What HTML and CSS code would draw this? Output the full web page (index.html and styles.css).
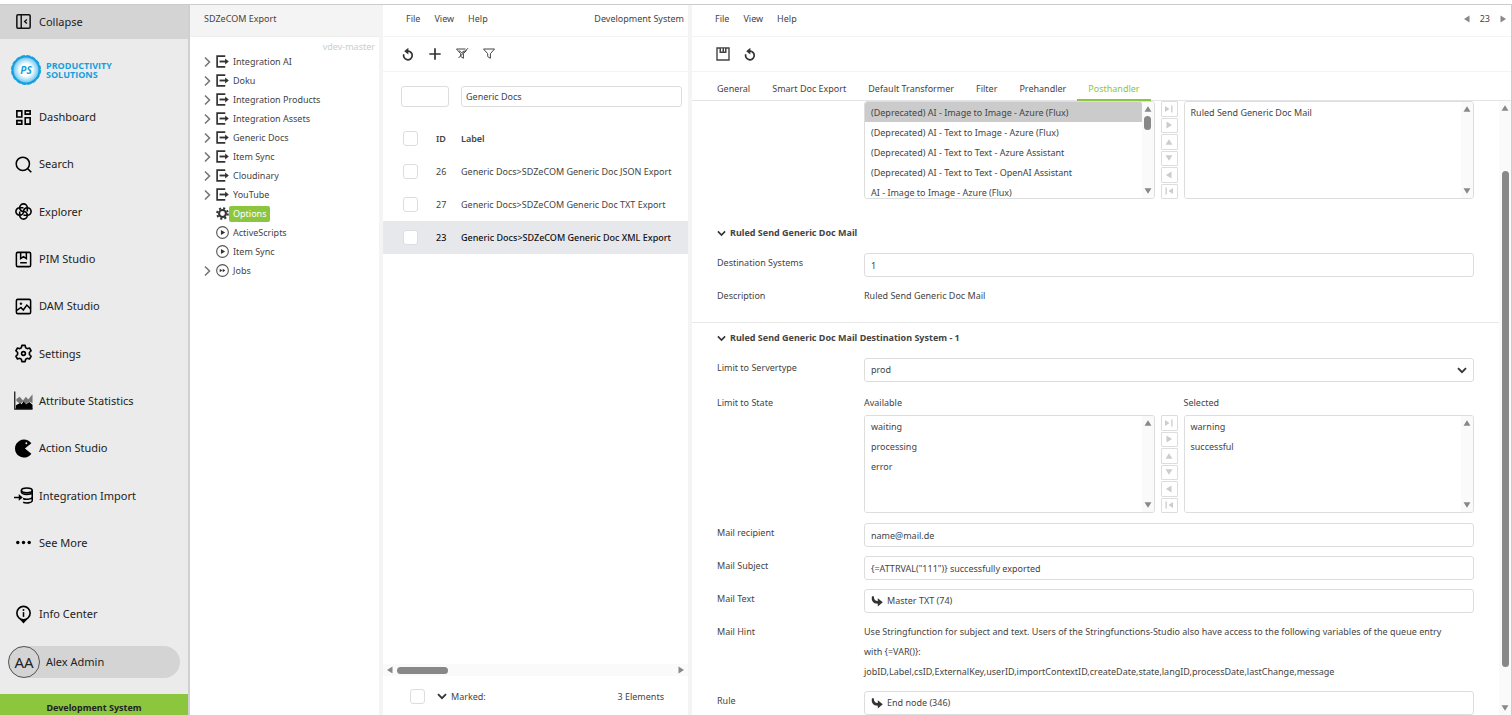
FILE: index.html
```html
<!DOCTYPE html>
<html lang="en">
<head>
<meta charset="utf-8">
<title>SDZeCOM Export</title>
<link rel="stylesheet" href="styles.css">
</head>
<body>
<svg class="defs" aria-hidden="true">
  <symbol id="i-export" viewBox="0 0 14 14"><path d="M10 1.200H1.200v11.600H10" fill="none" stroke="#333" stroke-width="1.800"/><path d="M3.800 7h8" stroke="#333" stroke-width="2"/><path d="M9.800 3.900 13.800 7 9.800 10.100z" fill="#333"/></symbol>
  <symbol id="i-right" viewBox="0 0 8 12"><path d="M1.500 1.500 6 6l-4.500 4.500" fill="none" stroke="#777" stroke-width="1.600"/></symbol>
  <symbol id="i-down" viewBox="0 0 10 7"><path d="M1 1.200 5 5.200l4-4" fill="none" stroke="#333" stroke-width="1.800"/></symbol>
  <symbol id="i-gear" viewBox="0 0 14 14"><circle cx="7" cy="7" r="3.700" fill="none" stroke="#333" stroke-width="2.200"/><circle cx="7" cy="7" r="5.700" fill="none" stroke="#333" stroke-width="2.200" stroke-dasharray="2.240 2.240"/></symbol>
  <symbol id="i-play" viewBox="0 0 14 14"><circle cx="7" cy="7" r="6.300" fill="none" stroke="#555" stroke-width="1.200"/><path d="M5.300 4.200 9.900 7l-4.600 2.800z" fill="#333"/></symbol>
  <symbol id="i-jobs" viewBox="0 0 14 14"><circle cx="7" cy="7" r="6.300" fill="none" stroke="#555" stroke-width="1.200"/><path d="M4 5.100 6.900 7 4 8.900zM7.200 5.100 10.100 7 7.200 8.900z" fill="#333"/></symbol>
  <symbol id="i-undo" viewBox="0 0 12 14"><path d="M1.800 7.200A4.300 4.300 0 1 0 6 4.200" fill="none" stroke="#333" stroke-width="1.700"/><path d="M2.200 4.200 6.400.800v6.600z" fill="#333"/></symbol>
  <symbol id="i-plus" viewBox="0 0 14 14"><path d="M7 1.300v11.400M1.300 7h11.400" stroke="#333" stroke-width="1.700"/></symbol>
  <symbol id="i-funnel" viewBox="0 0 14 14"><path d="M1.500 2h11L8.400 6.700v4.600L5.700 9.500V6.700z" fill="none" stroke="#444" stroke-width="1"/></symbol>
  <symbol id="i-funnel-x" viewBox="0 0 14 14"><path d="M11.500 3.500 8.400 6.700v4.600L5.700 9.500V6.700L1.500 2h9" fill="none" stroke="#444" stroke-width="1"/><path d="M13 1.200 3.500 11M4 3.700l2.800 2 2.600-2" fill="none" stroke="#444" stroke-width="1"/></symbol>
  <symbol id="i-save" viewBox="0 0 14 14"><path d="M1 1h12v12H1z" fill="none" stroke="#444" stroke-width="1.400"/><path d="M3.500 1h7v5h-7z" fill="#444"/><path d="M5 1.500h1.500v3H5zM8 1.500h1v3H8z" fill="#fff"/></symbol>
  <symbol id="i-turn" viewBox="0 0 12 11"><path d="M1 .300C0 4.600 2 7.800 6.800 7.800v2.800L11.800 6.300 6.800 2.200V5C4 5 2.800 3.200 2.800.300z" fill="#333"/></symbol>
  <symbol id="t-left" viewBox="0 0 8 8"><path d="M6.500.500v7L1 4z" fill="currentColor"/></symbol>
  <symbol id="t-right" viewBox="0 0 8 8"><path d="M1.500.500v7L7 4z" fill="currentColor"/></symbol>
  <symbol id="t-up" viewBox="0 0 8 8"><path d="M.500 6.800h7L4 1.300z" fill="currentColor"/></symbol>
  <symbol id="t-down" viewBox="0 0 8 8"><path d="M.500 1.200h7L4 6.700z" fill="currentColor"/></symbol>
  <symbol id="t-last" viewBox="0 0 8 8"><path d="M0 1v6l4.500-3zM6.200.500h1.300v7H6.200z" fill="currentColor"/></symbol>
  <symbol id="t-first" viewBox="0 0 8 8"><path d="M8 1v6L3.500 4zM.500.500h1.300v7H.500z" fill="currentColor"/></symbol>
</svg>
<div class="app">
  <aside class="sidebar">
    <button class="collapse" type="button">
      <svg class="nav-icon" viewBox="0 0 20 20"><rect x="3" y="3" width="14" height="14" rx="1.200" fill="none" stroke="#111" stroke-width="1.600"/><path d="M7.600 3v14" stroke="#111" stroke-width="1.500"/><path d="M13.600 7.800 11.200 10l2.400 2.200" fill="none" stroke="#111" stroke-width="1.500"/></svg>
      Collapse
    </button>
    <a class="brand" href="#">
      <svg class="brand-mark" viewBox="0 0 32 32">
        <defs><radialGradient id="glow"><stop offset="0.450" stop-color="#fff"/><stop offset="1" stop-color="#5cc0ee"/></radialGradient></defs>
        <circle cx="16" cy="16" r="13.500" fill="url(#glow)" stroke="#149fdf" stroke-width="2"/>
        <circle cx="16" cy="16" r="14.500" fill="none" stroke="#149fdf" stroke-width="1" stroke-dasharray="4 1.700"/>
        <text class="brand-ps" x="16" y="20" text-anchor="middle">PS</text>
      </svg>
      <span class="brand-name"><span>PRODUCTIVITY</span><span>SOLUTIONS</span></span>
    </a>
    <nav class="nav">
      <a href="#"><svg class="nav-icon" viewBox="0 0 20 20"><path d="M3 3h5.200v6.500H3zM11.800 3H17v3.500h-5.200zM11.800 10.200H17V17h-5.200zM3 13.300h5.200V17H3z" fill="none" stroke="#000" stroke-width="1.700"/></svg>Dashboard</a>
      <a href="#"><svg class="nav-icon" viewBox="0 0 20 20"><circle cx="9.300" cy="9.300" r="7" fill="none" stroke="#000" stroke-width="1.600"/><path d="m14.200 14.200 4 4" stroke="#000" stroke-width="1.700"/></svg>Search</a>
      <a href="#"><svg class="nav-icon" viewBox="0 0 20 20" fill="none" stroke="#000" stroke-width="1.700"><path d="M10 10a4 4 0 1 1 4-4v4M10 10a4 4 0 1 1 4 4h-4M10 10a4 4 0 1 1-4 4v-4M10 10a4 4 0 1 1-4-4h4"/></svg>Explorer</a>
      <a href="#"><svg class="nav-icon" viewBox="0 0 20 20" fill="none" stroke="#000" stroke-width="1.600"><rect x="2.500" y="2.500" width="15" height="15" rx="1.500"/><path d="M7 2.500V9l3-2 3 2V2.500M6.500 13.300h7"/></svg>PIM Studio</a>
      <a href="#"><svg class="nav-icon" viewBox="0 0 20 20" fill="none" stroke="#000" stroke-width="1.600"><rect x="2.500" y="2.500" width="15" height="15" rx="1.500"/><path d="m3 14 4.300-3 2.500 2.700L13.500 8.500l4 4"/><circle cx="7.300" cy="7" r="1" fill="#000" stroke-width=".600"/></svg>DAM Studio</a>
      <a href="#"><svg class="nav-icon" viewBox="0 0 20 20" fill="none" stroke="#000" stroke-width="1.700" stroke-linejoin="round"><path d="M8.300 1.500h3.400l.600 2.500 1.600.900 2.400-.700 1.700 2.900L16.200 9v2l1.800 1.900-1.700 2.900-2.400-.700-1.600.900-.600 2.500H8.300L7.700 16l-1.600-.900-2.400.700L2 12.900 3.800 11V9L2 7.100l1.700-2.900 2.400.700L7.700 4z"/><circle cx="10" cy="10" r="2"/></svg>Settings</a>
      <a href="#"><svg class="nav-icon" viewBox="0 0 20 20"><path d="M2.500 8.500 6 6l3.500 4 3-4 2.500 3L19.500 3.500v9.500l-3.500-2-3 2.500-3.500-2.500-3 2.500-4-3z" fill="#777"/><path d="M2 15l4.500-2.500L8 14l2-3 3 3 3-2.500 3.500 3V19H2z" fill="#000"/><path d="M.800.500v18.700H19.500" fill="none" stroke="#111" stroke-width="1.300"/></svg>Attribute Statistics</a>
      <a href="#"><svg class="nav-icon" viewBox="0 0 20 20"><path d="M18.300 4.600 11.500 10l6.800 5.500A9.500 9.500 0 1 1 10.500.500c3 0 6 1.500 7.800 4.100z" fill="#000"/><circle cx="13" cy="4.500" r="1" fill="#ebebeb"/></svg>Action Studio</a>
      <a href="#"><svg class="nav-icon" viewBox="0 0 20 20" fill="none" stroke="#000" stroke-width="1.600"><ellipse cx="13.500" cy="4.500" rx="5.700" ry="2.500"/><path d="M7.800 4.500v2.300c1.500 2.700 9.500 2.700 11.400 0v9c-1 2.200-7 2.600-9.500 1.300M19.200 4.500v3M9.500 13.200c2.500 1.300 8.500 1 9.700-1.200M0 12h5.500"/><path d="M5 8.500 9.200 12 5 15.500z" fill="#000" stroke="none"/></svg>Integration Import</a>
      <a href="#"><svg class="nav-icon" viewBox="0 0 20 20"><circle cx="4" cy="10" r="1.800"/><circle cx="10" cy="10" r="1.800"/><circle cx="16" cy="10" r="1.800"/></svg>See More</a>
    </nav>
    <a class="info" href="#"><svg class="nav-icon" viewBox="0 0 20 20"><circle cx="10" cy="8.500" r="7" fill="none" stroke="#000" stroke-width="1.700"/><path d="M4.500 13.500 10 19.500l5.500-6c-3 2.300-8 2.300-11 0z"/><path d="M10 7.500v5" stroke="#000" stroke-width="1.600"/><circle cx="10" cy="5.300" r="1"/></svg>Info Center</a>
    <button class="user" type="button"><span class="avatar">AA</span>Alex Admin</button>
    <div class="system">Development System</div>
  </aside>

  <section class="tree-panel">
    <header class="tree-head">SDZeCOM Export</header>
    <div class="version">vdev-master</div>
    <ul class="tree">
      <li><svg class="caret"><use href="#i-right"/></svg><svg class="tree-icon"><use href="#i-export"/></svg><a href="#">Integration AI</a></li>
      <li><svg class="caret"><use href="#i-right"/></svg><svg class="tree-icon"><use href="#i-export"/></svg><a href="#">Doku</a></li>
      <li><svg class="caret"><use href="#i-right"/></svg><svg class="tree-icon"><use href="#i-export"/></svg><a href="#">Integration Products</a></li>
      <li><svg class="caret"><use href="#i-right"/></svg><svg class="tree-icon"><use href="#i-export"/></svg><a href="#">Integration Assets</a></li>
      <li><svg class="caret"><use href="#i-right"/></svg><svg class="tree-icon"><use href="#i-export"/></svg><a href="#">Generic Docs</a></li>
      <li><svg class="caret"><use href="#i-right"/></svg><svg class="tree-icon"><use href="#i-export"/></svg><a href="#">Item Sync</a></li>
      <li><svg class="caret"><use href="#i-right"/></svg><svg class="tree-icon"><use href="#i-export"/></svg><a href="#">Cloudinary</a></li>
      <li><svg class="caret"><use href="#i-right"/></svg><svg class="tree-icon"><use href="#i-export"/></svg><a href="#">YouTube</a></li>
      <li><span class="caret"></span><svg class="tree-icon"><use href="#i-gear"/></svg><a class="current" href="#">Options</a></li>
      <li><span class="caret"></span><svg class="tree-icon"><use href="#i-play"/></svg><a href="#">ActiveScripts</a></li>
      <li><span class="caret"></span><svg class="tree-icon"><use href="#i-play"/></svg><a href="#">Item Sync</a></li>
      <li><svg class="caret"><use href="#i-right"/></svg><svg class="tree-icon"><use href="#i-jobs"/></svg><a href="#">Jobs</a></li>
    </ul>
  </section>

  <section class="list-panel">
    <header class="bar">
      <button type="button">File</button><button type="button">View</button><button type="button">Help</button>
      <span class="bar-end">Development System</span>
    </header>
    <div class="tools">
      <button type="button" aria-label="Reload"><svg class="tool"><use href="#i-undo"/></svg></button>
      <button type="button" aria-label="Add"><svg class="tool"><use href="#i-plus"/></svg></button>
      <button type="button" aria-label="Clear filter"><svg class="tool"><use href="#i-funnel-x"/></svg></button>
      <button type="button" aria-label="Filter"><svg class="tool"><use href="#i-funnel"/></svg></button>
    </div>
    <div class="filters">
      <input type="text" aria-label="Filter by ID">
      <input type="text" aria-label="Filter by label" value="Generic Docs">
    </div>
    <table class="items">
      <thead><tr><th class="pick"><input type="checkbox" aria-label="Select all"></th><th class="id">ID</th><th>Label</th></tr></thead>
      <tbody>
        <tr><td class="pick"><input type="checkbox" aria-label="Select 26"></td><td class="id">26</td><td>Generic Docs&gt;SDZeCOM Generic Doc JSON Export</td></tr>
        <tr><td class="pick"><input type="checkbox" aria-label="Select 27"></td><td class="id">27</td><td>Generic Docs&gt;SDZeCOM Generic Doc TXT Export</td></tr>
        <tr class="active"><td class="pick"><input type="checkbox" aria-label="Select 23"></td><td class="id">23</td><td>Generic Docs&gt;SDZeCOM Generic Doc XML Export</td></tr>
      </tbody>
    </table>
    <div class="hscroll"><svg class="arrow"><use href="#t-left"/></svg><div class="track"><div class="thumb"></div></div><svg class="arrow"><use href="#t-right"/></svg></div>
    <footer class="list-foot">
      <input type="checkbox" id="marked"><svg class="chev"><use href="#i-down"/></svg><label for="marked">Marked:</label>
      <span class="count">3 Elements</span>
    </footer>
  </section>

  <main class="detail">
    <header class="bar">
      <button type="button">File</button><button type="button">View</button><button type="button">Help</button>
      <div class="bar-end pager"><button type="button" aria-label="Previous"><svg class="arrow"><use href="#t-left"/></svg></button><span>23</span><button type="button" aria-label="Next"><svg class="arrow"><use href="#t-right"/></svg></button></div>
    </header>
    <div class="tools">
      <button type="button" aria-label="Save"><svg class="tool"><use href="#i-save"/></svg></button>
      <button type="button" aria-label="Revert"><svg class="tool"><use href="#i-undo"/></svg></button>
    </div>
    <nav class="tabs">
      <a href="#">General</a><a href="#">Smart Doc Export</a><a href="#">Default Transformer</a><a href="#">Filter</a><a href="#">Prehandler</a><a class="on" href="#">Posthandler</a>
    </nav>
    <div class="scroller">
      <form class="form">
        <div class="group group-first">
          <div class="shuttle shuttle-alone">
            <div class="listbox"><select multiple aria-label="Available posthandlers"><option class="hit">(Deprecated) AI - Image to Image - Azure (Flux)</option><option>(Deprecated) AI - Text to Image - Azure (Flux)</option><option>(Deprecated) AI - Text to Text - Azure Assistant</option><option>(Deprecated) AI - Text to Text - OpenAI Assistant</option><option>AI - Image to Image - Azure (Flux)</option></select><div class="vbar"><svg class="arrow"><use href="#t-up"/></svg><div class="track"><div class="thumb"></div></div><svg class="arrow"><use href="#t-down"/></svg></div></div>
            <div class="moves"><button type="button" aria-label="Add all"><svg><use href="#t-last"/></svg></button><button type="button" aria-label="Add"><svg><use href="#t-right"/></svg></button><button type="button" aria-label="Up"><svg><use href="#t-up"/></svg></button><button type="button" aria-label="Down"><svg><use href="#t-down"/></svg></button><button type="button" aria-label="Remove"><svg><use href="#t-left"/></svg></button><button type="button" aria-label="Remove all"><svg><use href="#t-first"/></svg></button></div>
            <div class="listbox"><select multiple aria-label="Selected posthandlers"><option>Ruled Send Generic Doc Mail</option></select><div class="vbar"><svg class="arrow"><use href="#t-up"/></svg><div class="track"></div><svg class="arrow"><use href="#t-down"/></svg></div></div>
          </div>
        </div>

        <div class="group">
          <h2><svg class="chev"><use href="#i-down"/></svg>Ruled Send Generic Doc Mail</h2>
          <div class="row"><label for="dest">Destination Systems</label><input id="dest" type="text" value="1"></div>
          <div class="row row-text"><span class="name">Description</span><span class="value">Ruled Send Generic Doc Mail</span></div>
        </div>

        <div class="group group-ruled">
          <h2><svg class="chev"><use href="#i-down"/></svg>Ruled Send Generic Doc Mail Destination System - 1</h2>
          <div class="row"><label for="server">Limit to Servertype</label><div class="pickbox"><select id="server"><option>prod</option></select><svg class="chev"><use href="#i-down"/></svg></div></div>
          <div class="row row-state"><span class="name">Limit to State</span>
            <div class="shuttle">
              <label for="avail">Available</label><span></span><label for="chosen">Selected</label>
              <div class="listbox"><select multiple id="avail"><option>waiting</option><option>processing</option><option>error</option></select><div class="vbar"><svg class="arrow"><use href="#t-up"/></svg><div class="track"></div><svg class="arrow"><use href="#t-down"/></svg></div></div>
              <div class="moves"><button type="button" aria-label="Add all"><svg><use href="#t-last"/></svg></button><button type="button" aria-label="Add"><svg><use href="#t-right"/></svg></button><button type="button" aria-label="Up"><svg><use href="#t-up"/></svg></button><button type="button" aria-label="Down"><svg><use href="#t-down"/></svg></button><button type="button" aria-label="Remove"><svg><use href="#t-left"/></svg></button><button type="button" aria-label="Remove all"><svg><use href="#t-first"/></svg></button></div>
              <div class="listbox"><select multiple id="chosen"><option>warning</option><option>successful</option></select><div class="vbar"><svg class="arrow"><use href="#t-up"/></svg><div class="track"></div><svg class="arrow"><use href="#t-down"/></svg></div></div>
            </div>
          </div>
          <div class="row"><label for="rcpt">Mail recipient</label><input id="rcpt" type="text" value="name@mail.de"></div>
          <div class="row"><label for="subj">Mail Subject</label><input id="subj" type="text" value="{=ATTRVAL(&quot;111&quot;)} successfully exported"></div>
          <div class="row"><span class="name">Mail Text</span><button class="ref" type="button"><svg><use href="#i-turn"/></svg>Master TXT (74)</button></div>
          <div class="row row-text"><span class="name">Mail Hint</span><p class="value">Use Stringfunction for subject and text. Users of the Stringfunctions-Studio also have access to the following variables of the queue entry<br>with {=VAR()}:<br>jobID,Label,csID,ExternalKey,userID,importContextID,createDate,state,langID,processDate,lastChange,message</p></div>
          <div class="row"><span class="name">Rule</span><button class="ref" type="button"><svg><use href="#i-turn"/></svg>End node (346)</button></div>
        </div>
      </form>
      <div class="vbar page-bar"><svg class="arrow"><use href="#t-up"/></svg><div class="track"><div class="thumb"></div></div><svg class="arrow"><use href="#t-down"/></svg></div>
    </div>
  </main>
</div>
</body>
</html>
```
FILE: styles.css
```css
* { box-sizing: border-box; }
body {
  margin: 0;
  padding-top: 4px;
  height: 100vh;
  overflow: hidden;
  background: #fff;
  color: #444;
  font: 9px/14px "Noto Sans", sans-serif;
}
button, input, select { font: inherit; color: inherit; margin: 0; }
button { border: 0; padding: 0; background: none; }
a { color: inherit; text-decoration: none; }
.defs { display: none; }
svg { flex: none; }

.app {
  display: grid;
  grid-template-columns: 190px 193px 309px minmax(0, 1fr);
  height: 100%;
  border-top: 1px solid #ccc;
  border-right: 1px solid #ccc;
}

/* Sidebar */
.sidebar {
  display: flex;
  flex-direction: column;
  min-height: 0;
  background: #ebebeb;
  border-right: 2px solid #d0d0d0;
  font: 11px/16px "Noto Sans", sans-serif;
  color: #222;
}
.collapse, .nav a, .info {
  display: flex;
  align-items: center;
  gap: 6px;
  padding: 0 0 1px 14px;
}
.collapse { height: 34px; background: #d4d4d4; }
.nav-icon { width: 19px; height: 19px; }
.brand {
  display: flex;
  align-items: center;
  gap: 4px;
  height: 55px;
  padding: 7px 0 0 10px;
}
.brand-mark { width: 32px; height: 32px; }
.brand-ps { font: italic bold 10px "Noto Sans", sans-serif; fill: #149fdf; }
.brand-name {
  display: grid;
  font: bold 9px/9px "Open Sans", sans-serif;
  color: #149fdf;
}
.nav { flex: 1; display: flex; flex-direction: column; min-height: 0; }
.nav a { flex: 1; }
.info { height: 47px; margin-top: 24px; }
.user {
  display: flex;
  align-items: center;
  gap: 6px;
  height: 32px;
  margin: 8px 8px 16px;
  border-radius: 16px;
  background: #d4d4d4;
}
.avatar {
  width: 32px;
  height: 32px;
  border: 1px solid #555;
  border-radius: 50%;
  font-size: 15px;
  line-height: 31px;
  text-align: center;
}
.system {
  height: 21px;
  padding-top: 4px;
  background: #8cc63f;
  font-size: 9px;
  font-weight: bold;
  line-height: 20px;
  text-align: center;
}

/* Tree */
.tree-panel { border-right: 4px solid #f4f4f4; }
.tree-head {
  height: 32px;
  padding-left: 14px;
  line-height: 28px;
  background: #f4f4f4;
  border-bottom: 1px solid #eee;
}
.version { height: 15px; padding: 3px 4px 0 0; text-align: right; color: #ccc; }
.tree { margin: 0; padding: 0 0 0 13px; list-style: none; }
.tree li { display: flex; align-items: center; height: 19px; }
.caret { width: 9px; height: 12px; margin-right: 4px; }
.tree-icon { width: 13px; height: 13px; }
.tree a { padding: 0 4px; border-radius: 2px; line-height: 16px; }
.tree .current { background: #8cc63f; color: #fff; }

/* Shared bars */
.list-panel, .detail { display: flex; flex-direction: column; min-width: 0; min-height: 0; }
.list-panel { border-right: 4px solid #f4f4f4; }
.bar {
  display: flex;
  align-items: center;
  gap: 14px;
  flex: none;
  height: 32px;
  padding: 0 4px 3px 23px;
  border-bottom: 1px solid #f4f4f4;
}
.bar-end { margin-left: auto; }
.pager { display: flex; align-items: center; gap: 9px; }
.arrow { display: block; width: 8px; height: 8px; color: #888; }
.tools {
  display: flex;
  align-items: center;
  gap: 13px;
  flex: none;
  height: 35px;
  padding: 0 0 1px 18px;
  border-bottom: 1px solid #f4f4f4;
}
.tool { display: block; width: 14px; height: 14px; }
.detail .tools { padding-left: 24px; }

/* List */
input[type="text"] {
  width: 100%;
  min-width: 0;
  height: 24px;
  padding: 0 6px;
  border: 1px solid #ddd;
  border-radius: 3px;
  background: #fff;
  outline: 0;
}
.filters {
  display: grid;
  grid-template-columns: 48px 1fr;
  gap: 12px;
  padding: 14px 6px 15px 18px;
}
.filters input[type="text"] { height: 21px; padding: 0 4px; }
.items { width: 100%; border-collapse: collapse; table-layout: fixed; }
.items th, .items td { height: 33px; padding: 0; text-align: left; white-space: nowrap; }
.items th { font-weight: 600; }
.items .pick { width: 42px; padding-left: 20px; }
.items .id { width: 36px; padding-left: 11px; }
.items .active { background: #e7e8ec; color: #111; font-weight: 500; }
input[type="checkbox"] {
  appearance: none;
  display: block;
  width: 15px;
  height: 15px;
  border: 1px solid #ddd;
  border-radius: 3px;
  background: #fff;
}
.hscroll {
  display: flex;
  align-items: center;
  gap: 3px;
  height: 12px;
  margin-top: auto;
  padding: 0 3px;
  background: #fafafa;
}
.track { flex: 1; min-height: 0; }
.thumb { border-radius: 4px; background: #888; }
.hscroll .thumb { width: 51px; height: 7px; }
.list-foot { display: flex; align-items: center; height: 39px; padding: 2px 24px 0 27px; }
.list-foot .chev { margin: 0 4px 0 12px; }
.count { margin-left: auto; }
.chev { width: 10px; height: 7px; }

/* Detail */
.tabs {
  display: flex;
  flex: none;
  height: 29px;
  padding-left: 14px;
  border-bottom: 1px solid #e4e4e8;
}
.tabs a { height: 29px; padding: 0 11px; line-height: 34px; border-bottom: 2px solid transparent; }
.tabs .on { color: #8cc63f; border-color: #8cc63f; }
.scroller { display: flex; flex: 1; min-height: 0; }
.form { flex: 1; min-width: 0; overflow: hidden; }
.group { padding: 0 25px; }
.group-first { padding-bottom: 27px; }
.group h2 {
  display: flex;
  align-items: center;
  gap: 4px;
  margin: 0 0 13px;
  font-size: 9px;
  line-height: 14px;
  font-weight: bold;
}
.group h2 .chev { width: 9px; }
.group-ruled { border-top: 1px solid #e8e8e8; padding-top: 8px; margin-top: 16px; }
.row { display: grid; grid-template-columns: 147px minmax(0, 1fr); margin-bottom: 9px; }
.row > label, .row > .name { padding-top: 3px; }
.row-text .value { margin: 0; line-height: 20px; }
.row-state { margin-top: 11px; margin-bottom: 10px; }
.shuttle { display: grid; grid-template-columns: 1fr 17px 1fr; column-gap: 6px; }
.shuttle > label { padding: 3px 0 5px; }
.shuttle-alone { margin-left: 147px; }
.listbox {
  display: flex;
  height: 98px;
  border: 1px solid #ddd;
  border-radius: 3px;
  overflow: hidden;
}
.listbox select {
  flex: 1;
  min-width: 0;
  height: 96px;
  padding: 0;
  border: 0;
  outline: 0;
  background: #fff;
  overflow: hidden;
}
.listbox option { min-height: 20px; padding: 4px 6px 1px; line-height: 15px; }
.listbox .hit { background: #cbcbcb; }
.vbar {
  display: flex;
  flex-direction: column;
  align-items: center;
  width: 12px;
  padding: 3px 0;
  background: #fafafa;
}
.vbar .track { margin: 3px 0; }
.vbar .thumb { width: 7px; height: 14px; }
.page-bar .track { padding-top: 56px; }
.page-bar .thumb { height: 496px; }
.moves { display: grid; grid-template-rows: repeat(6, 1fr); gap: 1px; }
.moves button {
  display: grid;
  place-items: center;
  border: 1px solid #ddd;
  border-radius: 1px;
  color: #ccc;
}
.moves svg { width: 8px; height: 8px; }
.pickbox { display: flex; align-items: center; position: relative; }
.pickbox select {
  width: 100%;
  height: 24px;
  padding: 0 6px;
  appearance: none;
  border: 1px solid #ddd;
  border-radius: 3px;
  background: #fff;
}
.pickbox .chev { position: absolute; right: 7px; }
.ref {
  display: flex;
  align-items: center;
  gap: 4px;
  height: 24px;
  padding: 0 6px;
  border: 1px solid #ddd;
  border-radius: 3px;
}
.ref svg { width: 12px; height: 11px; }
```
